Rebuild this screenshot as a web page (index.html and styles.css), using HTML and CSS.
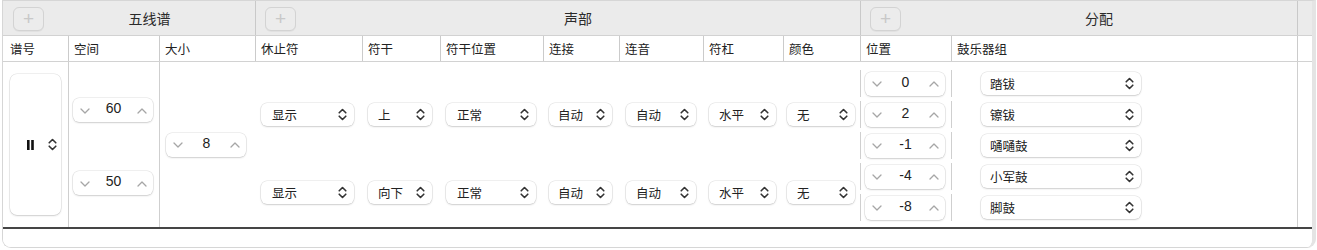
FILE: index.html
```html
<!DOCTYPE html>
<html lang="zh-CN">
<head>
<meta charset="utf-8">
<title>鼓谱设置</title>
<link rel="stylesheet" href="styles.css">
</head>
<body>
<div class="table">
  <div class="group-head">
    <div class="group g-staff"><button class="add">+</button><span class="group-title">五线谱</span></div>
    <div class="group g-voice"><button class="add">+</button><span class="group-title">声部</span></div>
    <div class="group g-assign"><button class="add">+</button><span class="group-title">分配</span></div>
    <div class="group g-fill"></div>
  </div>
  <div class="col-head">
    <div class="ch">谱号</div>
    <div class="ch">空间</div>
    <div class="ch">大小</div>
    <div class="ch">休止符</div>
    <div class="ch">符干</div>
    <div class="ch">符干位置</div>
    <div class="ch">连接</div>
    <div class="ch">连音</div>
    <div class="ch">符杠</div>
    <div class="ch">颜色</div>
    <div class="ch">位置</div>
    <div class="ch">鼓乐器组</div>
    <div class="ch ch-fill"></div>
  </div>
  <div class="body">
    <div class="cell c-clef">
      <div class="clef-pop">
        <svg class="clef" width="7" height="10" viewBox="0 0 7 10"><rect x="0" y="0" width="2.6" height="10" fill="#111"/><rect x="4.2" y="0" width="2.6" height="10" fill="#111"/></svg>
        <svg class="updown" width="9" height="13" viewBox="0 0 9 13"><path d="M1.2 4.8 L4.5 1.5 L7.8 4.8 M1.2 8.2 L4.5 11.5 L7.8 8.2" fill="none" stroke="#333" stroke-width="1.6" stroke-linecap="round" stroke-linejoin="round"/></svg>
      </div>
    </div>
    <div class="cell c-space">
      <div class="stepper"><svg class="chev" width="10" height="6" viewBox="0 0 10 6"><path d="M1 1 L5 5 L9 1" fill="none" stroke="#a6a6a6" stroke-width="1.3" stroke-linecap="round" stroke-linejoin="round"/></svg><span class="val">60</span><svg class="chev" width="10" height="6" viewBox="0 0 10 6"><path d="M1 5 L5 1 L9 5" fill="none" stroke="#a6a6a6" stroke-width="1.3" stroke-linecap="round" stroke-linejoin="round"/></svg></div>
      <div class="stepper"><svg class="chev" width="10" height="6" viewBox="0 0 10 6"><path d="M1 1 L5 5 L9 1" fill="none" stroke="#a6a6a6" stroke-width="1.3" stroke-linecap="round" stroke-linejoin="round"/></svg><span class="val">50</span><svg class="chev" width="10" height="6" viewBox="0 0 10 6"><path d="M1 5 L5 1 L9 5" fill="none" stroke="#a6a6a6" stroke-width="1.3" stroke-linecap="round" stroke-linejoin="round"/></svg></div>
    </div>
    <div class="cell c-size">
      <div class="stepper"><svg class="chev" width="10" height="6" viewBox="0 0 10 6"><path d="M1 1 L5 5 L9 1" fill="none" stroke="#a6a6a6" stroke-width="1.3" stroke-linecap="round" stroke-linejoin="round"/></svg><span class="val">8</span><svg class="chev" width="10" height="6" viewBox="0 0 10 6"><path d="M1 5 L5 1 L9 5" fill="none" stroke="#a6a6a6" stroke-width="1.3" stroke-linecap="round" stroke-linejoin="round"/></svg></div>
    </div>
    <div class="voices">
      <div class="voice-row vr-top">
        <div class="vc"><div class="pop p-rest"><span>显示</span><svg width="9" height="13" viewBox="0 0 9 13"><path d="M1.2 4.8 L4.5 1.5 L7.8 4.8 M1.2 8.2 L4.5 11.5 L7.8 8.2" fill="none" stroke="#333" stroke-width="1.6" stroke-linecap="round" stroke-linejoin="round"/></svg></div></div>
        <div class="vc"><div class="pop p-stem"><span>上</span><svg width="9" height="13" viewBox="0 0 9 13"><path d="M1.2 4.8 L4.5 1.5 L7.8 4.8 M1.2 8.2 L4.5 11.5 L7.8 8.2" fill="none" stroke="#333" stroke-width="1.6" stroke-linecap="round" stroke-linejoin="round"/></svg></div></div>
        <div class="vc"><div class="pop p-stempos"><span>正常</span><svg width="9" height="13" viewBox="0 0 9 13"><path d="M1.2 4.8 L4.5 1.5 L7.8 4.8 M1.2 8.2 L4.5 11.5 L7.8 8.2" fill="none" stroke="#333" stroke-width="1.6" stroke-linecap="round" stroke-linejoin="round"/></svg></div></div>
        <div class="vc"><div class="pop p-tie"><span>自动</span><svg width="9" height="13" viewBox="0 0 9 13"><path d="M1.2 4.8 L4.5 1.5 L7.8 4.8 M1.2 8.2 L4.5 11.5 L7.8 8.2" fill="none" stroke="#333" stroke-width="1.6" stroke-linecap="round" stroke-linejoin="round"/></svg></div></div>
        <div class="vc vc-tuplet"><div class="pop p-tuplet"><span>自动</span><svg width="9" height="13" viewBox="0 0 9 13"><path d="M1.2 4.8 L4.5 1.5 L7.8 4.8 M1.2 8.2 L4.5 11.5 L7.8 8.2" fill="none" stroke="#333" stroke-width="1.6" stroke-linecap="round" stroke-linejoin="round"/></svg></div></div>
        <div class="vc"><div class="pop p-beam"><span>水平</span><svg width="9" height="13" viewBox="0 0 9 13"><path d="M1.2 4.8 L4.5 1.5 L7.8 4.8 M1.2 8.2 L4.5 11.5 L7.8 8.2" fill="none" stroke="#333" stroke-width="1.6" stroke-linecap="round" stroke-linejoin="round"/></svg></div></div>
        <div class="vc vc-color"><div class="pop p-color"><span>无</span><svg width="9" height="13" viewBox="0 0 9 13"><path d="M1.2 4.8 L4.5 1.5 L7.8 4.8 M1.2 8.2 L4.5 11.5 L7.8 8.2" fill="none" stroke="#333" stroke-width="1.6" stroke-linecap="round" stroke-linejoin="round"/></svg></div></div>
      </div>
      <div class="voice-row vr-bottom">
        <div class="vc"><div class="pop p-rest"><span>显示</span><svg width="9" height="13" viewBox="0 0 9 13"><path d="M1.2 4.8 L4.5 1.5 L7.8 4.8 M1.2 8.2 L4.5 11.5 L7.8 8.2" fill="none" stroke="#333" stroke-width="1.6" stroke-linecap="round" stroke-linejoin="round"/></svg></div></div>
        <div class="vc"><div class="pop p-stem"><span>向下</span><svg width="9" height="13" viewBox="0 0 9 13"><path d="M1.2 4.8 L4.5 1.5 L7.8 4.8 M1.2 8.2 L4.5 11.5 L7.8 8.2" fill="none" stroke="#333" stroke-width="1.6" stroke-linecap="round" stroke-linejoin="round"/></svg></div></div>
        <div class="vc"><div class="pop p-stempos"><span>正常</span><svg width="9" height="13" viewBox="0 0 9 13"><path d="M1.2 4.8 L4.5 1.5 L7.8 4.8 M1.2 8.2 L4.5 11.5 L7.8 8.2" fill="none" stroke="#333" stroke-width="1.6" stroke-linecap="round" stroke-linejoin="round"/></svg></div></div>
        <div class="vc"><div class="pop p-tie"><span>自动</span><svg width="9" height="13" viewBox="0 0 9 13"><path d="M1.2 4.8 L4.5 1.5 L7.8 4.8 M1.2 8.2 L4.5 11.5 L7.8 8.2" fill="none" stroke="#333" stroke-width="1.6" stroke-linecap="round" stroke-linejoin="round"/></svg></div></div>
        <div class="vc vc-tuplet"><div class="pop p-tuplet"><span>自动</span><svg width="9" height="13" viewBox="0 0 9 13"><path d="M1.2 4.8 L4.5 1.5 L7.8 4.8 M1.2 8.2 L4.5 11.5 L7.8 8.2" fill="none" stroke="#333" stroke-width="1.6" stroke-linecap="round" stroke-linejoin="round"/></svg></div></div>
        <div class="vc"><div class="pop p-beam"><span>水平</span><svg width="9" height="13" viewBox="0 0 9 13"><path d="M1.2 4.8 L4.5 1.5 L7.8 4.8 M1.2 8.2 L4.5 11.5 L7.8 8.2" fill="none" stroke="#333" stroke-width="1.6" stroke-linecap="round" stroke-linejoin="round"/></svg></div></div>
        <div class="vc vc-color"><div class="pop p-color"><span>无</span><svg width="9" height="13" viewBox="0 0 9 13"><path d="M1.2 4.8 L4.5 1.5 L7.8 4.8 M1.2 8.2 L4.5 11.5 L7.8 8.2" fill="none" stroke="#333" stroke-width="1.6" stroke-linecap="round" stroke-linejoin="round"/></svg></div></div>
      </div>
    </div>
    <div class="assign">
      <div class="drum-row">
        <div class="drum-pos"><div class="stepper"><svg class="chev" width="10" height="6" viewBox="0 0 10 6"><path d="M1 1 L5 5 L9 1" fill="none" stroke="#a6a6a6" stroke-width="1.3" stroke-linecap="round" stroke-linejoin="round"/></svg><span class="val">0</span><svg class="chev" width="10" height="6" viewBox="0 0 10 6"><path d="M1 5 L5 1 L9 5" fill="none" stroke="#a6a6a6" stroke-width="1.3" stroke-linecap="round" stroke-linejoin="round"/></svg></div></div>
        <div class="drum-kit"><div class="pop p-kit"><span>踏钹</span><svg width="9" height="13" viewBox="0 0 9 13"><path d="M1.2 4.8 L4.5 1.5 L7.8 4.8 M1.2 8.2 L4.5 11.5 L7.8 8.2" fill="none" stroke="#333" stroke-width="1.6" stroke-linecap="round" stroke-linejoin="round"/></svg></div></div>
      </div>
      <div class="drum-row">
        <div class="drum-pos"><div class="stepper"><svg class="chev" width="10" height="6" viewBox="0 0 10 6"><path d="M1 1 L5 5 L9 1" fill="none" stroke="#a6a6a6" stroke-width="1.3" stroke-linecap="round" stroke-linejoin="round"/></svg><span class="val">2</span><svg class="chev" width="10" height="6" viewBox="0 0 10 6"><path d="M1 5 L5 1 L9 5" fill="none" stroke="#a6a6a6" stroke-width="1.3" stroke-linecap="round" stroke-linejoin="round"/></svg></div></div>
        <div class="drum-kit"><div class="pop p-kit"><span>镲钹</span><svg width="9" height="13" viewBox="0 0 9 13"><path d="M1.2 4.8 L4.5 1.5 L7.8 4.8 M1.2 8.2 L4.5 11.5 L7.8 8.2" fill="none" stroke="#333" stroke-width="1.6" stroke-linecap="round" stroke-linejoin="round"/></svg></div></div>
      </div>
      <div class="drum-row">
        <div class="drum-pos"><div class="stepper"><svg class="chev" width="10" height="6" viewBox="0 0 10 6"><path d="M1 1 L5 5 L9 1" fill="none" stroke="#a6a6a6" stroke-width="1.3" stroke-linecap="round" stroke-linejoin="round"/></svg><span class="val">-1</span><svg class="chev" width="10" height="6" viewBox="0 0 10 6"><path d="M1 5 L5 1 L9 5" fill="none" stroke="#a6a6a6" stroke-width="1.3" stroke-linecap="round" stroke-linejoin="round"/></svg></div></div>
        <div class="drum-kit"><div class="pop p-kit"><span>嗵嗵鼓</span><svg width="9" height="13" viewBox="0 0 9 13"><path d="M1.2 4.8 L4.5 1.5 L7.8 4.8 M1.2 8.2 L4.5 11.5 L7.8 8.2" fill="none" stroke="#333" stroke-width="1.6" stroke-linecap="round" stroke-linejoin="round"/></svg></div></div>
      </div>
      <div class="drum-row">
        <div class="drum-pos"><div class="stepper"><svg class="chev" width="10" height="6" viewBox="0 0 10 6"><path d="M1 1 L5 5 L9 1" fill="none" stroke="#a6a6a6" stroke-width="1.3" stroke-linecap="round" stroke-linejoin="round"/></svg><span class="val">-4</span><svg class="chev" width="10" height="6" viewBox="0 0 10 6"><path d="M1 5 L5 1 L9 5" fill="none" stroke="#a6a6a6" stroke-width="1.3" stroke-linecap="round" stroke-linejoin="round"/></svg></div></div>
        <div class="drum-kit"><div class="pop p-kit"><span>小军鼓</span><svg width="9" height="13" viewBox="0 0 9 13"><path d="M1.2 4.8 L4.5 1.5 L7.8 4.8 M1.2 8.2 L4.5 11.5 L7.8 8.2" fill="none" stroke="#333" stroke-width="1.6" stroke-linecap="round" stroke-linejoin="round"/></svg></div></div>
      </div>
      <div class="drum-row">
        <div class="drum-pos"><div class="stepper"><svg class="chev" width="10" height="6" viewBox="0 0 10 6"><path d="M1 1 L5 5 L9 1" fill="none" stroke="#a6a6a6" stroke-width="1.3" stroke-linecap="round" stroke-linejoin="round"/></svg><span class="val">-8</span><svg class="chev" width="10" height="6" viewBox="0 0 10 6"><path d="M1 5 L5 1 L9 5" fill="none" stroke="#a6a6a6" stroke-width="1.3" stroke-linecap="round" stroke-linejoin="round"/></svg></div></div>
        <div class="drum-kit"><div class="pop p-kit"><span>脚鼓</span><svg width="9" height="13" viewBox="0 0 9 13"><path d="M1.2 4.8 L4.5 1.5 L7.8 4.8 M1.2 8.2 L4.5 11.5 L7.8 8.2" fill="none" stroke="#333" stroke-width="1.6" stroke-linecap="round" stroke-linejoin="round"/></svg></div></div>
      </div>
    </div>
    <div class="cell c-fill"></div>
  </div>
  <div class="footer"></div>
</div>
</body>
</html>
```

FILE: styles.css
```css
* { box-sizing: border-box; }

html, body {
  margin: 0;
  padding: 0;
  background: #ffffff;
}

body {
  font-family: "Liberation Sans", "Noto Sans CJK SC", sans-serif;
  font-size: 13px;
  color: #222222;
}

.table {
  margin-left: 2px;
  width: 1314px;
  height: 248px;
  border: 1px solid #d6d6d6;
  border-right: 4px solid #e4e4e4;
  border-radius: 0 0 9px 9px;
  background: #ffffff;
  overflow: hidden;
  display: flex;
  flex-direction: column;
}

/* ---------- group header ---------- */
.group-head {
  display: grid;
  grid-template-columns: 253px 605px 437px 1fr;
  height: 35px;
  background: #ebebeb;
  border-bottom: 1px solid #d2d2d2;
}

.group {
  display: flex;
  align-items: center;
  border-right: 1px solid #c9c9c9;
  padding-left: 10px;
}

.g-voice, .g-assign { padding-left: 9px; }

.g-fill { border-right: none; }

.add {
  flex: none;
  width: 31px;
  height: 24px;
  margin-top: 1px;
  padding: 0;
  border: 1px solid #d3d3d3;
  border-radius: 6px;
  background: #ececec;
  color: #c8c8c8;
  font-family: "Liberation Sans", sans-serif;
  font-size: 19px;
  font-weight: 300;
  line-height: 20px;
  box-shadow: 0 1px 0 rgba(0, 0, 0, 0.04);
}

.group-title {
  flex: 1;
  text-align: center;
  font-size: 14px;
  color: #2a2a2a;
  padding-bottom: 1px;
}

/* ---------- column header ---------- */
.col-head, .body {
  display: grid;
  grid-template-columns: 66px 91px 96px 107px 78px 103px 76px 84px 80px 77px 91px 346px 1fr;
}

.col-head {
  height: 26px;
  border-bottom: 1px solid #d2d2d2;
}

.ch {
  display: flex;
  align-items: center;
  padding-left: 5px;
  border-right: 1px solid #cbcbcb;
  font-size: 12.5px;
  color: #222222;
}

.ch:first-child { padding-left: 7px; }

.ch-fill { border-right: none; }

/* ---------- body ---------- */
.body {
  height: 165px;
}

.cell {
  display: flex;
}

.c-clef {
  border-right: 1px solid #cfcfcf;
  align-items: center;
  justify-content: center;
}

.clef-pop {
  width: 51px;
  height: 141px;
  border-radius: 7px;
  background: #ffffff;
  box-shadow: 0 0 0 0.5px rgba(0, 0, 0, 0.12), 0 1px 2px rgba(0, 0, 0, 0.14);
  display: flex;
  align-items: center;
  padding-left: 17px;
  gap: 14px;
}

.c-space {
  border-right: 1px solid #cfcfcf;
  flex-direction: column;
  padding: 36px 0 0 4px;
  gap: 49px;
}

.c-size {
  align-items: center;
  padding-left: 6px;
}

/* stepper */
.stepper {
  width: 80px;
  height: 24px;
  border-radius: 6px;
  background: #ffffff;
  box-shadow: 0 0 0 0.5px rgba(0, 0, 0, 0.12), 0 1px 2px rgba(0, 0, 0, 0.14);
  display: flex;
  align-items: center;
  justify-content: space-between;
  padding: 0 6px 0 7px;
}

.chev {
  flex: none;
  margin-top: 1px;
}

.val {
  font-size: 14px;
  color: #222222;
  margin-top: -4px;
}

/* popup */
.pop {
  height: 23px;
  border-radius: 6px;
  background: #ffffff;
  box-shadow: 0 0 0 0.5px rgba(0, 0, 0, 0.12), 0 1px 2px rgba(0, 0, 0, 0.14);
  display: flex;
  align-items: center;
  justify-content: space-between;
  padding: 0 7px 0 11px;
  font-size: 12.5px;
  color: #222222;
}

.pop svg { flex: none; }

.p-rest { width: 93px; }
.p-stem { width: 64px; padding-left: 10px; }
.p-stempos { width: 90px; }
.p-tie { width: 63px; padding-left: 9px; }
.p-tuplet { width: 70px; padding-left: 10px; }
.p-beam { width: 67px; padding-left: 10px; }
.p-color { width: 68px; padding-left: 10px; }
.p-kit { width: 160px; padding-left: 9px; }

/* voices */
.voices {
  grid-column: 4 / 11;
  display: flex;
  flex-direction: column;
  padding-top: 8px;
  gap: 4px;
}

.voice-row {
  display: grid;
  grid-template-columns: 107px 78px 103px 76px 84px 80px 77px;
  align-items: center;
}

.vr-top { height: 89px; }
.vr-bottom { height: 58px; }

.vc { padding-left: 5px; }
.vc-tuplet { padding-left: 6px; }
.vc-color { padding-left: 3px; }

/* assignment */
.assign {
  grid-column: 11 / 13;
  border-right: 1px solid #cfcfcf;
  display: flex;
  flex-direction: column;
  padding-top: 8px;
  gap: 4px;
}

.drum-row {
  display: grid;
  grid-template-columns: 91px 1fr;
  height: 27px;
}

.drum-pos {
  display: flex;
  align-items: center;
  padding-left: 4px;
  border-right: 1px solid #cfcfcf;
  box-shadow: -1px 0 0 #cfcfcf;
}

.drum-kit {
  display: flex;
  align-items: center;
  padding-left: 29px;
}

/* footer */
.footer {
  flex: 1;
  border-top: 2px solid #454545;
  background: #ffffff;
}
```
